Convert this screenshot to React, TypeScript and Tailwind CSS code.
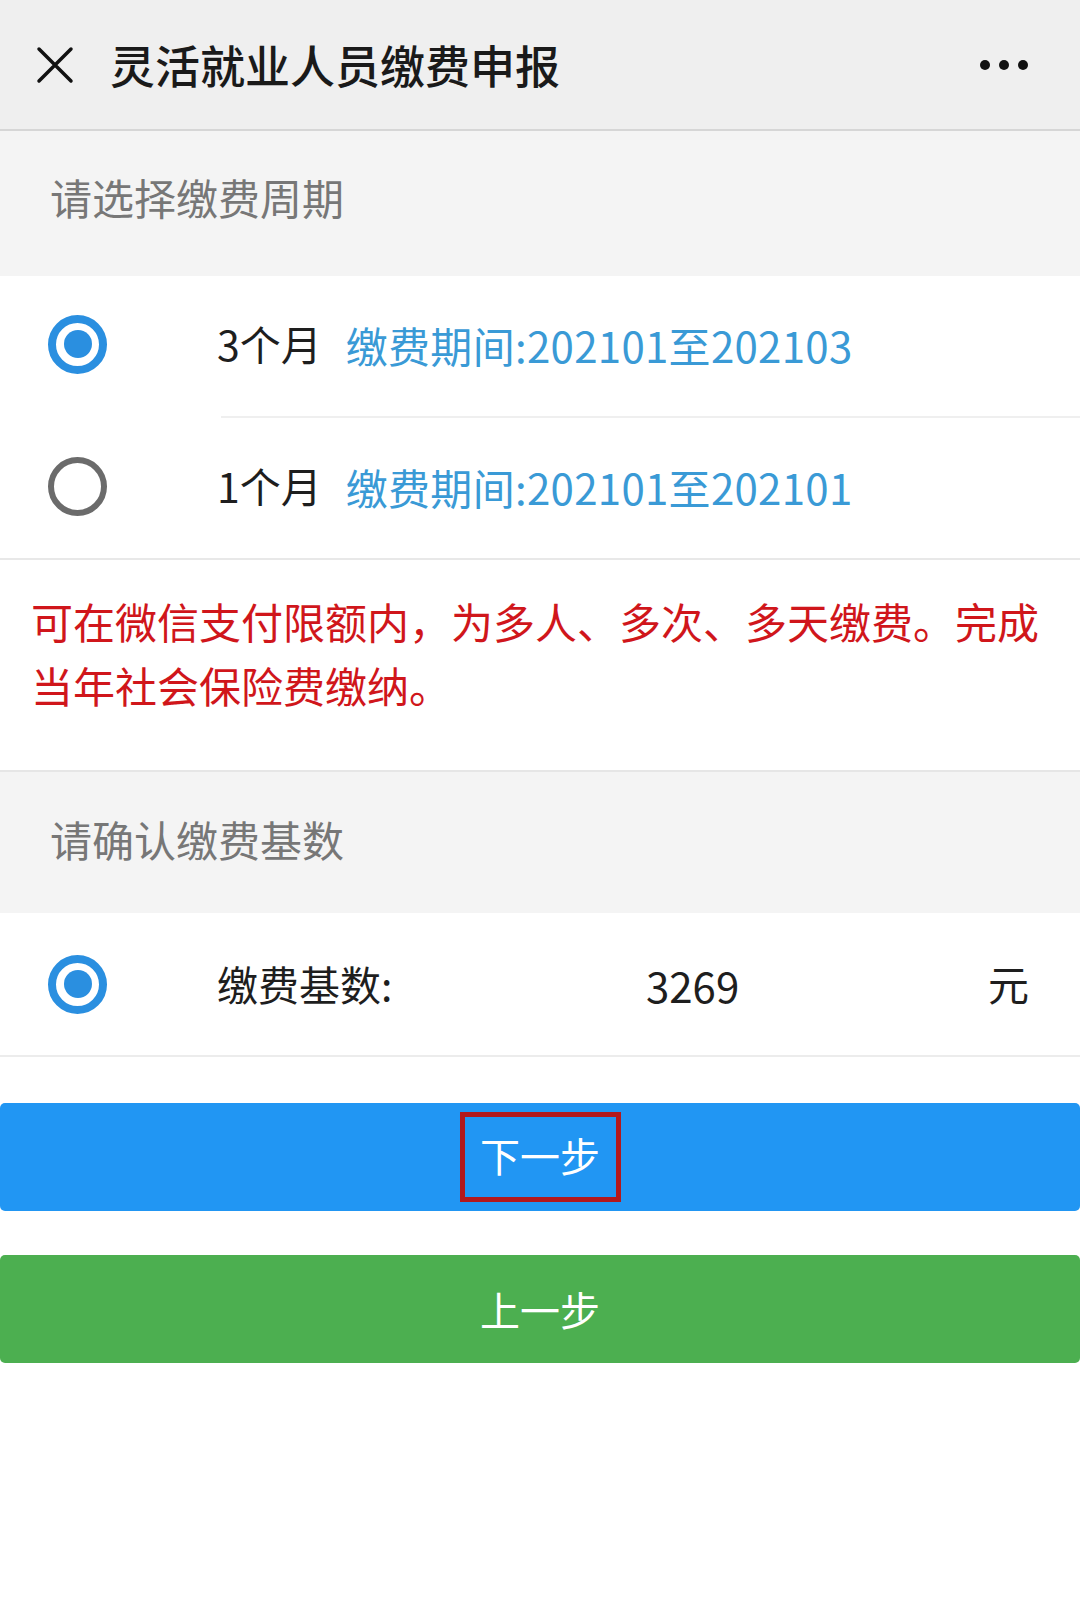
import React, { useState } from 'react';

const font = { fontFamily: '"Noto Sans CJK SC", "Noto Sans", sans-serif' };

function Radio({ checked }: { checked: boolean }) {
  return checked ? (
    <span className="flex h-[59px] w-[59px] items-center justify-center rounded-full border-[8px] border-[#2a8fe0]">
      <span className="h-[28px] w-[28px] rounded-full bg-[#2a8fe0]" />
    </span>
  ) : (
    <span className="block h-[59px] w-[59px] rounded-full border-[6px] border-[#6b6b6b]" />
  );
}

export default function App() {
  const [period, setPeriod] = useState(3);

  const periods = [
    { months: 3, range: '缴费期间:202101至202103' },
    { months: 1, range: '缴费期间:202101至202101' }
  ];

  return (
    <div className="min-h-[1618px] w-[1080px] bg-white" style={font}>
      {/* Header */}
      <div className="flex h-[131px] items-center border-b-2 border-[#d6d6d6] bg-[#efefef] pl-[36px] pr-[52px]">
        <svg width="38" height="38" viewBox="0 0 38 38" className="shrink-0">
          <path d="M3 3 L35 35 M35 3 L3 35" stroke="#111" strokeWidth="3.5" strokeLinecap="round" />
        </svg>
        <h1 className="ml-[36px] text-[45px] font-medium leading-none text-[#1a1a1a]">灵活就业人员缴费申报</h1>
        <div className="ml-auto flex gap-[9px]">
          <span className="h-[10px] w-[10px] rounded-full bg-[#111]" />
          <span className="h-[10px] w-[10px] rounded-full bg-[#111]" />
          <span className="h-[10px] w-[10px] rounded-full bg-[#111]" />
        </div>
      </div>

      {/* Period section */}
      <div className="flex h-[145px] items-center bg-[#f4f4f4] pb-[14px] pl-[50px] text-[42px] text-[#777]">请选择缴费周期</div>

      {periods.map((p, i) => (
        <div
          key={p.months}
          onClick={() => setPeriod(p.months)}
          className={`flex h-[142px] items-center bg-white pb-[4px] ${i === 0 ? 'border-b-2 border-[#f0f0f0] [border-image:linear-gradient(to_right,transparent_222px,#efefef_222px)_1]' : 'border-b-2 border-[#e8e8e8]'}`}
        >
          <div className="w-[217px] shrink-0 pl-[48px]">
            <Radio checked={period === p.months} />
          </div>
          <span className="text-[41px] text-[#1e1e1e]">{p.months}个月</span>
          <span className="ml-[24px] text-[42px] tracking-[0.3px] text-[#3a9ad6]">{p.range}</span>
        </div>
      ))}

      {/* Notice */}
      <div className="flex h-[212px] items-center border-b-2 border-[#e6e6e6] bg-white px-[31px] pb-[24px]">
        <p className="text-[42px] leading-[64px] text-[#d0161b]">
          可在微信支付限额内，为多人、多次、多天缴费。完成当年社会保险费缴纳。
        </p>
      </div>

      {/* Base section */}
      <div className="flex h-[141px] items-center bg-[#f4f4f4] pb-[8px] pl-[50px] text-[42px] text-[#777]">请确认缴费基数</div>

      <div className="flex h-[144px] items-center border-b-2 border-[#ececec] bg-white pr-[51px]">
        <div className="w-[217px] shrink-0 pl-[48px]">
          <Radio checked />
        </div>
        <span className="w-[429px] shrink-0 text-[41px] text-[#1e1e1e]">缴费基数:</span>
        <span className="text-[42px] text-[#1e1e1e]">3269</span>
        <span className="ml-auto text-[41px] text-[#1e1e1e]">元</span>
      </div>

      {/* Buttons */}
      <div className="mt-[46px] flex flex-col gap-[44px]">
        <button className="flex h-[108px] w-full items-center justify-center rounded-[5px] bg-[#2196f3]">
          <span className="flex h-[90px] w-[161px] items-center justify-center border-[5px] border-[#b3181c] pb-[4px] text-[40px] text-white">
            下一步
          </span>
        </button>
        <button className="flex h-[108px] w-full items-center justify-center rounded-[5px] bg-[#4caf50] text-[40px] text-white">
          上一步
        </button>
      </div>
    </div>
  );
}
